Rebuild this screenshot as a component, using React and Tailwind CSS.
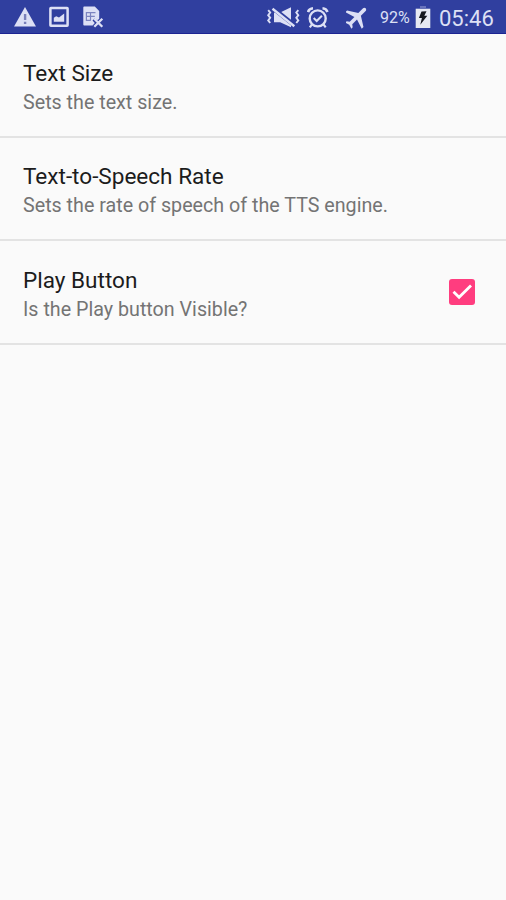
import React from 'react';

function WarningIcon() {
  return (
    <svg width="22" height="22" viewBox="0 0 22 22" className="shrink-0">
      <path d="M11 1 22 20.500H0Z" fill="#dde0f5" />
      <path d="M9.900 8h2.400v6H9.900zM9.900 15.700h2.400v2.400H9.900z" fill="#7a80ba" />
    </svg>
  );
}

function PictureIcon() {
  return (
    <svg width="20" height="22" viewBox="0 0 20 22" className="shrink-0">
      <rect x="1.400" y="1.900" width="17.200" height="17.800" rx="0.5" fill="none" stroke="#dde0f5" strokeWidth="2.500" />
      <path d="M4.800 15.800v-4l2.400-1.600 2.800 1.400 5.200-4v8.200Z" fill="#dde0f5" />
    </svg>
  );
}

function DocumentIcon() {
  return (
    <svg width="21" height="22" viewBox="0 0 21 22" className="shrink-0">
      <path d="M1.200.5h10.600L16.200 5v8l-2.100 1.300-2.600-1.800-2 2 2.300 2.600-2.200 2.400H1.200Q.3 19.500.3 18.600V1.400q0-.9.9-.9Z" fill="#dde0f5" />
      <path d="M2.800 6.700h9.700M2.800 10.300h9M2.800 14.300h5M3.400 6.700v7.600M7.500 6.700v7.600" fill="none" stroke="#7c84c0" strokeWidth="1.200" />
      <path d="m11.300 12.800 8 8M19.300 12.800l-8 8" fill="none" stroke="#dde0f5" strokeWidth="2.300" />
    </svg>
  );
}

function VibrateMuteIcon() {
  return (
    <svg width="33" height="22" viewBox="0 0 33 22" className="shrink-0">
      <path d="M7 5.500h6.200L24 .3v20l-10.800-5H7Z" fill="#dde0f5" />
      <path d="M5.500.8 28 18.800" stroke="#303f9f" strokeWidth="4.400" />
      <path d="m5.500 1.800 21.800 17.400" stroke="#dde0f5" strokeWidth="2.400" />
      <path d="m1.200 3.200 2 2.400-2 2.600 2 2.600-2 2.600 2 2.600M31.300 3.200l-2 2.400 2 2.600-2 2.600 2 2.600-2 2.600" fill="none" stroke="#dde0f5" strokeWidth="1.900" />
    </svg>
  );
}

function AlarmIcon() {
  return (
    <svg width="22" height="22" viewBox="0 0 22 22" fill="none" stroke="#dde0f5" className="shrink-0">
      <circle cx="10.700" cy="11.400" r="8" strokeWidth="2.400" />
      <path d="M1 5Q2.200 1.600 6 1.300M20.500 5Q19.300 1.600 15.500 1.300" strokeWidth="2.600" />
      <path d="m5 17.400-2.200 3M16.500 17.400l2.200 3" strokeWidth="2.200" />
      <path d="m6.700 11 3 3 5.200-5.200" strokeWidth="2" />
    </svg>
  );
}

function PlaneIcon() {
  return (
    <svg width="22" height="22" viewBox="0 0 22 22" className="shrink-0">
      <path transform="translate(11 10) rotate(45) scale(1.220) translate(-11.500 -12)" d="M21 16v-2l-8-5V3.500C13 2.670 12.330 2 11.500 2S10 2.670 10 3.500V9l-8 5v2l8-2.500V19l-2 1.500V22l3.500-1 3.500 1v-1.500L13 19v-5.500l8 2.500Z" fill="#dde0f5" />
    </svg>
  );
}

function BatteryIcon() {
  return (
    <svg width="16" height="23" viewBox="0 0 16 23" className="shrink-0">
      <path d="M5 0h6v2H5Z" fill="#6872bc" />
      <path d="M.7 2.700h14.600V22H.7Z" fill="#e7e9f2" />
      <path d="m6.500 5.500 5-.3-2.200 4.600h3l-7 9 1.600-6.800H3.900Z" fill="#15171e" />
    </svg>
  );
}

function StatusBar() {
  return (
    <header className="flex h-[34px] items-start border-b border-[#1c2492] bg-[#303f9f] pt-1.5 pr-[12px] pl-[14px] text-[#dde0f5]">
      <div className="flex items-center">
        <WarningIcon />
        <div className="ml-[13px] flex"><PictureIcon /></div>
        <div className="ml-[14px] flex"><DocumentIcon /></div>
      </div>
      <div className="ml-auto flex h-[23px] items-center">
        <VibrateMuteIcon />
        <div className="ml-[7px] flex"><AlarmIcon /></div>
        <div className="ml-[17px] flex"><PlaneIcon /></div>
        <span className="ml-[12px] w-[32px] pt-[1px] text-[16px] leading-[22px] whitespace-nowrap">92%</span>
        <div className="ml-[3px] flex"><BatteryIcon /></div>
        <span className="ml-[8px] w-[55px] pt-[2px] text-[22px] leading-[23px] whitespace-nowrap">05:46</span>
      </div>
    </header>
  );
}

function Preference({ title, summary, children }) {
  return (
    <section className="flex h-[103.500px] items-center justify-between border-b-2 border-[#e3e3e3] pr-[31px] pl-[23px]">
      <div className="pt-[4px]">
        <h2 className="text-[22.550px] leading-[30px] text-[#1c1c1c]">{title}</h2>
        <p className="text-[19.700px] leading-[27px] text-[#747474]">{summary}</p>
      </div>
      {children}
    </section>
  );
}

function CheckedBox() {
  return (
    <button type="button" role="checkbox" aria-checked="true" aria-label="Play Button" className="flex size-[26px] items-center justify-center rounded-[3px] bg-[#ff3d7f]">
      <svg width="26" height="26" viewBox="0 0 26 26" fill="none">
        <path d="m4.500 12.700 5.600 5.600L22 6.500" stroke="#fff" strokeWidth="2.800" />
      </svg>
    </button>
  );
}

export default function App() {
  return (
    <main className="h-[900px] w-[506px] overflow-hidden bg-[#fafafa] font-[Roboto,sans-serif]">
      <StatusBar />
      <div className="pt-[0.400px]">
        <Preference title="Text Size" summary="Sets the text size." />
        <Preference title="Text-to-Speech Rate" summary="Sets the rate of speech of the TTS engine." />
        <Preference title="Play Button" summary="Is the Play button Visible?">
          <CheckedBox />
        </Preference>
      </div>
    </main>
  );
}
